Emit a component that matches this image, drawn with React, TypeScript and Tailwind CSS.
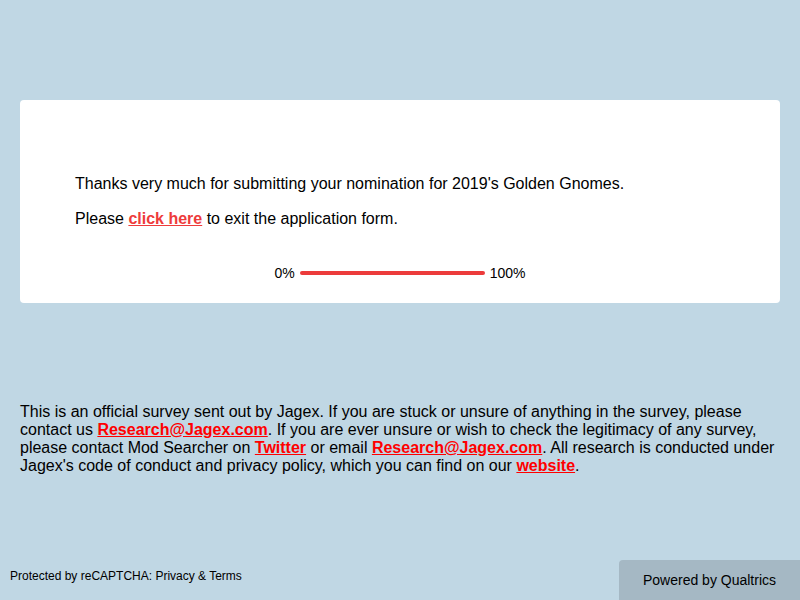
import React from "react";

const font = { fontFamily: '"Liberation Sans", Arial, sans-serif' };

export default function App() {
  return (
    <div
      className="relative min-h-[600px] w-full bg-[#c0d7e4] text-black overflow-hidden"
      style={font}
    >
      <div className="pt-[100px] px-5">
        <section className="h-[203px] rounded bg-white pl-[55px] pr-[55px] pt-[74px]">
          <p className="text-[16px] leading-[20px]">
            Thanks very much for submitting your nomination for 2019's Golden Gnomes.
          </p>
          <p className="mt-[15px] text-[16px] leading-[20px]">
            Please{" "}
            <a href="#" className="font-bold text-[#ee3b3b] underline">
              click here
            </a>{" "}
            to exit the application form.
          </p>
          <div className="mt-[36px] flex items-center justify-center text-[14px] leading-[16px]">
            <span className="mr-[5px]">0%</span>
            <div className="h-[4px] w-[185px] rounded-full bg-[#ec3b3b]" />
            <span className="ml-[5px]">100%</span>
          </div>
        </section>
      </div>

      <p className="mt-[100px] px-5 text-[16px] leading-[18px]">
        This is an official survey sent out by Jagex. If you are stuck or unsure of anything in the survey, please
        contact us{" "}
        <a href="#" className="font-bold text-[#ff0000] underline">
          Research@Jagex.com
        </a>
        . If you are ever unsure or wish to check the legitimacy of any survey, please contact Mod Searcher on{" "}
        <a href="#" className="font-bold text-[#ff0000] underline">
          Twitter
        </a>{" "}
        or email{" "}
        <a href="#" className="font-bold text-[#ff0000] underline">
          Research@Jagex.com
        </a>
        . All research is conducted under Jagex's code of conduct and privacy policy, which you can find on our{" "}
        <a href="#" className="font-bold text-[#ff0000] underline">
          website
        </a>
        .
      </p>

      <div className="absolute bottom-0 left-0 right-0 flex items-end justify-between">
        <div className="pl-[10px] pb-[17px] text-[12px] leading-[14px]">
          Protected by reCAPTCHA: Privacy &amp; Terms
        </div>
        <div className="flex h-[40px] w-[181px] items-center justify-center rounded-tl bg-[#a5b8c4] text-[14px]">
          Powered by Qualtrics
        </div>
      </div>
    </div>
  );
}
